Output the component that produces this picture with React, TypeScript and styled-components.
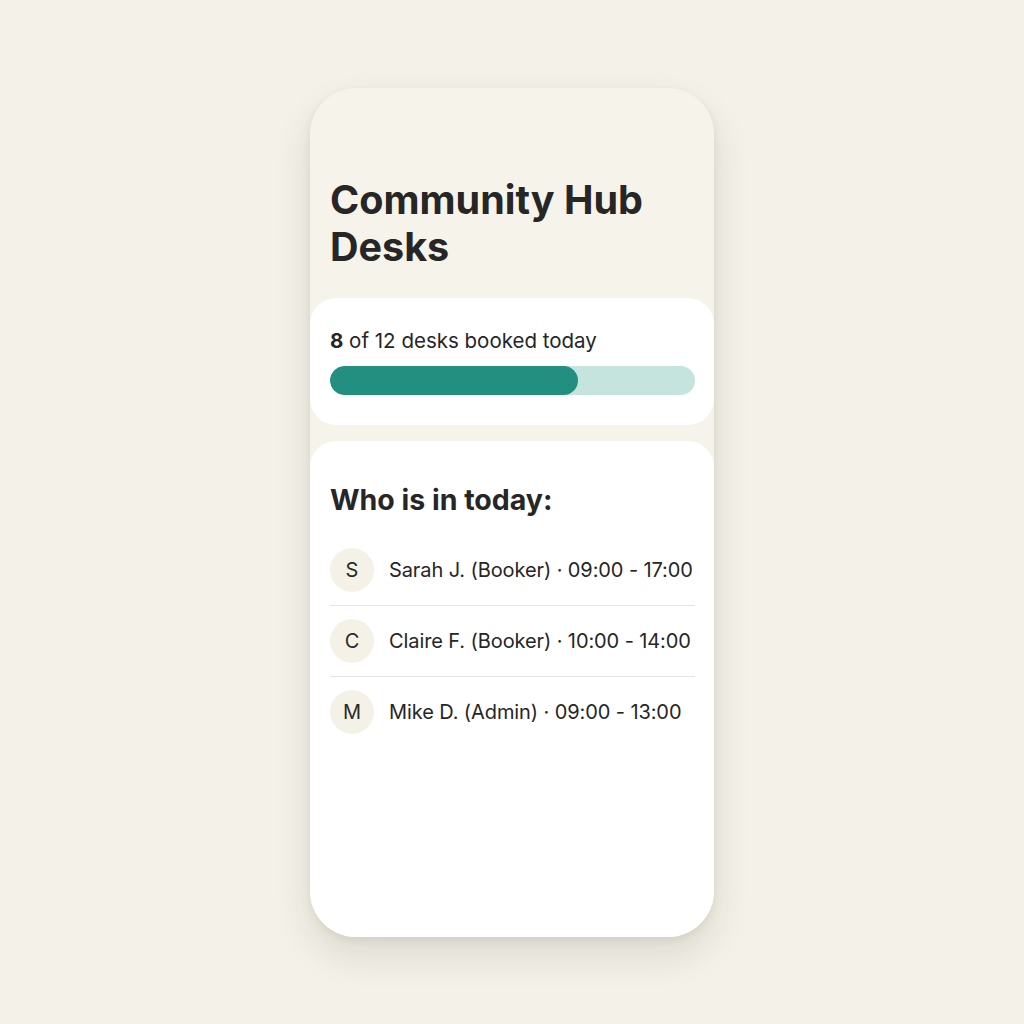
import React, { FC } from "react";
import styled, { createGlobalStyle } from "styled-components";

type Person = { initial: string; name: string; role: string; from: string; to: string };

const people: Person[] = [
  { initial: "S", name: "Sarah J.", role: "Booker", from: "09:00", to: "17:00" },
  { initial: "C", name: "Claire F.", role: "Booker", from: "10:00", to: "14:00" },
  { initial: "M", name: "Mike D.", role: "Admin", from: "09:00", to: "13:00" },
];

const booked = 8;
const total = 12;

const App: FC = () => {
  const pct = Math.round((booked / total) * 1000) / 10 + 1.3;

  return (
    <>
      <GlobalStyle />
      <Page>
        <Phone>
          <Header>
            <Title>Community Hub Desks</Title>
          </Header>

          <StatsCard>
            <StatText>
              <strong>{booked}</strong> of {total} desks booked today
            </StatText>
            <Track>
              <Fill style={{ width: `${pct}%` }} />
            </Track>
          </StatsCard>

          <ListCard>
            <ListTitle>Who is in today:</ListTitle>
            <List>
              {people.map((p) => (
                <Row key={p.name}>
                  <Avatar>{p.initial}</Avatar>
                  <RowText>
                    {p.name} ({p.role}) · {p.from} - {p.to}
                  </RowText>
                </Row>
              ))}
            </List>
          </ListCard>
        </Phone>
      </Page>
    </>
  );
};

const GlobalStyle = createGlobalStyle`
  html, body {
    margin: 0;
    padding: 0;
    background: #f3f1e8;
  }
  body {
    font-family: Inter, "Noto Sans", sans-serif;
    color: #242424;
  }
`;

const Page = styled.div`
  min-height: 1024px;
  display: flex;
  justify-content: center;
  padding-top: 88px;
  box-sizing: border-box;
`;

const Phone = styled.div`
  width: 404px;
  height: 849px;
  border-radius: 46px;
  background: #f5f3ea;
  box-shadow: 0 18px 36px rgba(60, 55, 35, 0.12), 0 3px 8px rgba(60, 55, 35, 0.08);
  display: flex;
  flex-direction: column;
  overflow: hidden;
`;

const Header = styled.div`
  padding: 89px 20px 27px;
`;

const Title = styled.h1`
  margin: 0;
  font-size: 39.5px;
  line-height: 47px;
  font-weight: 700;
  letter-spacing: 0;
  color: #262626;
  max-width: 350px;
`;

const StatsCard = styled.div`
  background: #ffffff;
  border-radius: 26px;
  padding: 29px 19px 30px 20px;
`;

const StatText = styled.div`
  font-size: 20.5px;
  line-height: 27px;
  color: #262626;

  strong {
    font-weight: 700;
  }
`;

const Track = styled.div`
  margin-top: 12px;
  height: 29px;
  border-radius: 15px;
  background: #c6e4de;
  overflow: hidden;
`;

const Fill = styled.div`
  height: 100%;
  border-radius: 15px;
  background: #228f81;
`;

const ListCard = styled.div`
  flex: 1;
  margin-top: 16px;
  background: #ffffff;
  border-radius: 26px 26px 0 0;
  padding: 42px 19px 0 20px;
`;

const ListTitle = styled.h2`
  margin: 0 0 18px;
  font-size: 28.5px;
  line-height: 34px;
  font-weight: 700;
  letter-spacing: 0;
  color: #262626;
`;

const List = styled.div`
  display: flex;
  flex-direction: column;
`;

const Row = styled.div`
  display: flex;
  align-items: center;
  gap: 15px;
  padding: 13px 0;
  border-bottom: 1px solid #e6e4df;

  &:last-child {
    border-bottom: none;
  }
`;

const Avatar = styled.div`
  width: 44px;
  height: 44px;
  border-radius: 50%;
  background: #f4f1e6;
  display: flex;
  align-items: center;
  justify-content: center;
  font-size: 20px;
  color: #2a2a2a;
  flex-shrink: 0;
`;

const RowText = styled.div`
  font-size: 20px;
  line-height: 26px;
  color: #262626;
  white-space: nowrap;
  letter-spacing: -0.1px;
`;

export default App;
